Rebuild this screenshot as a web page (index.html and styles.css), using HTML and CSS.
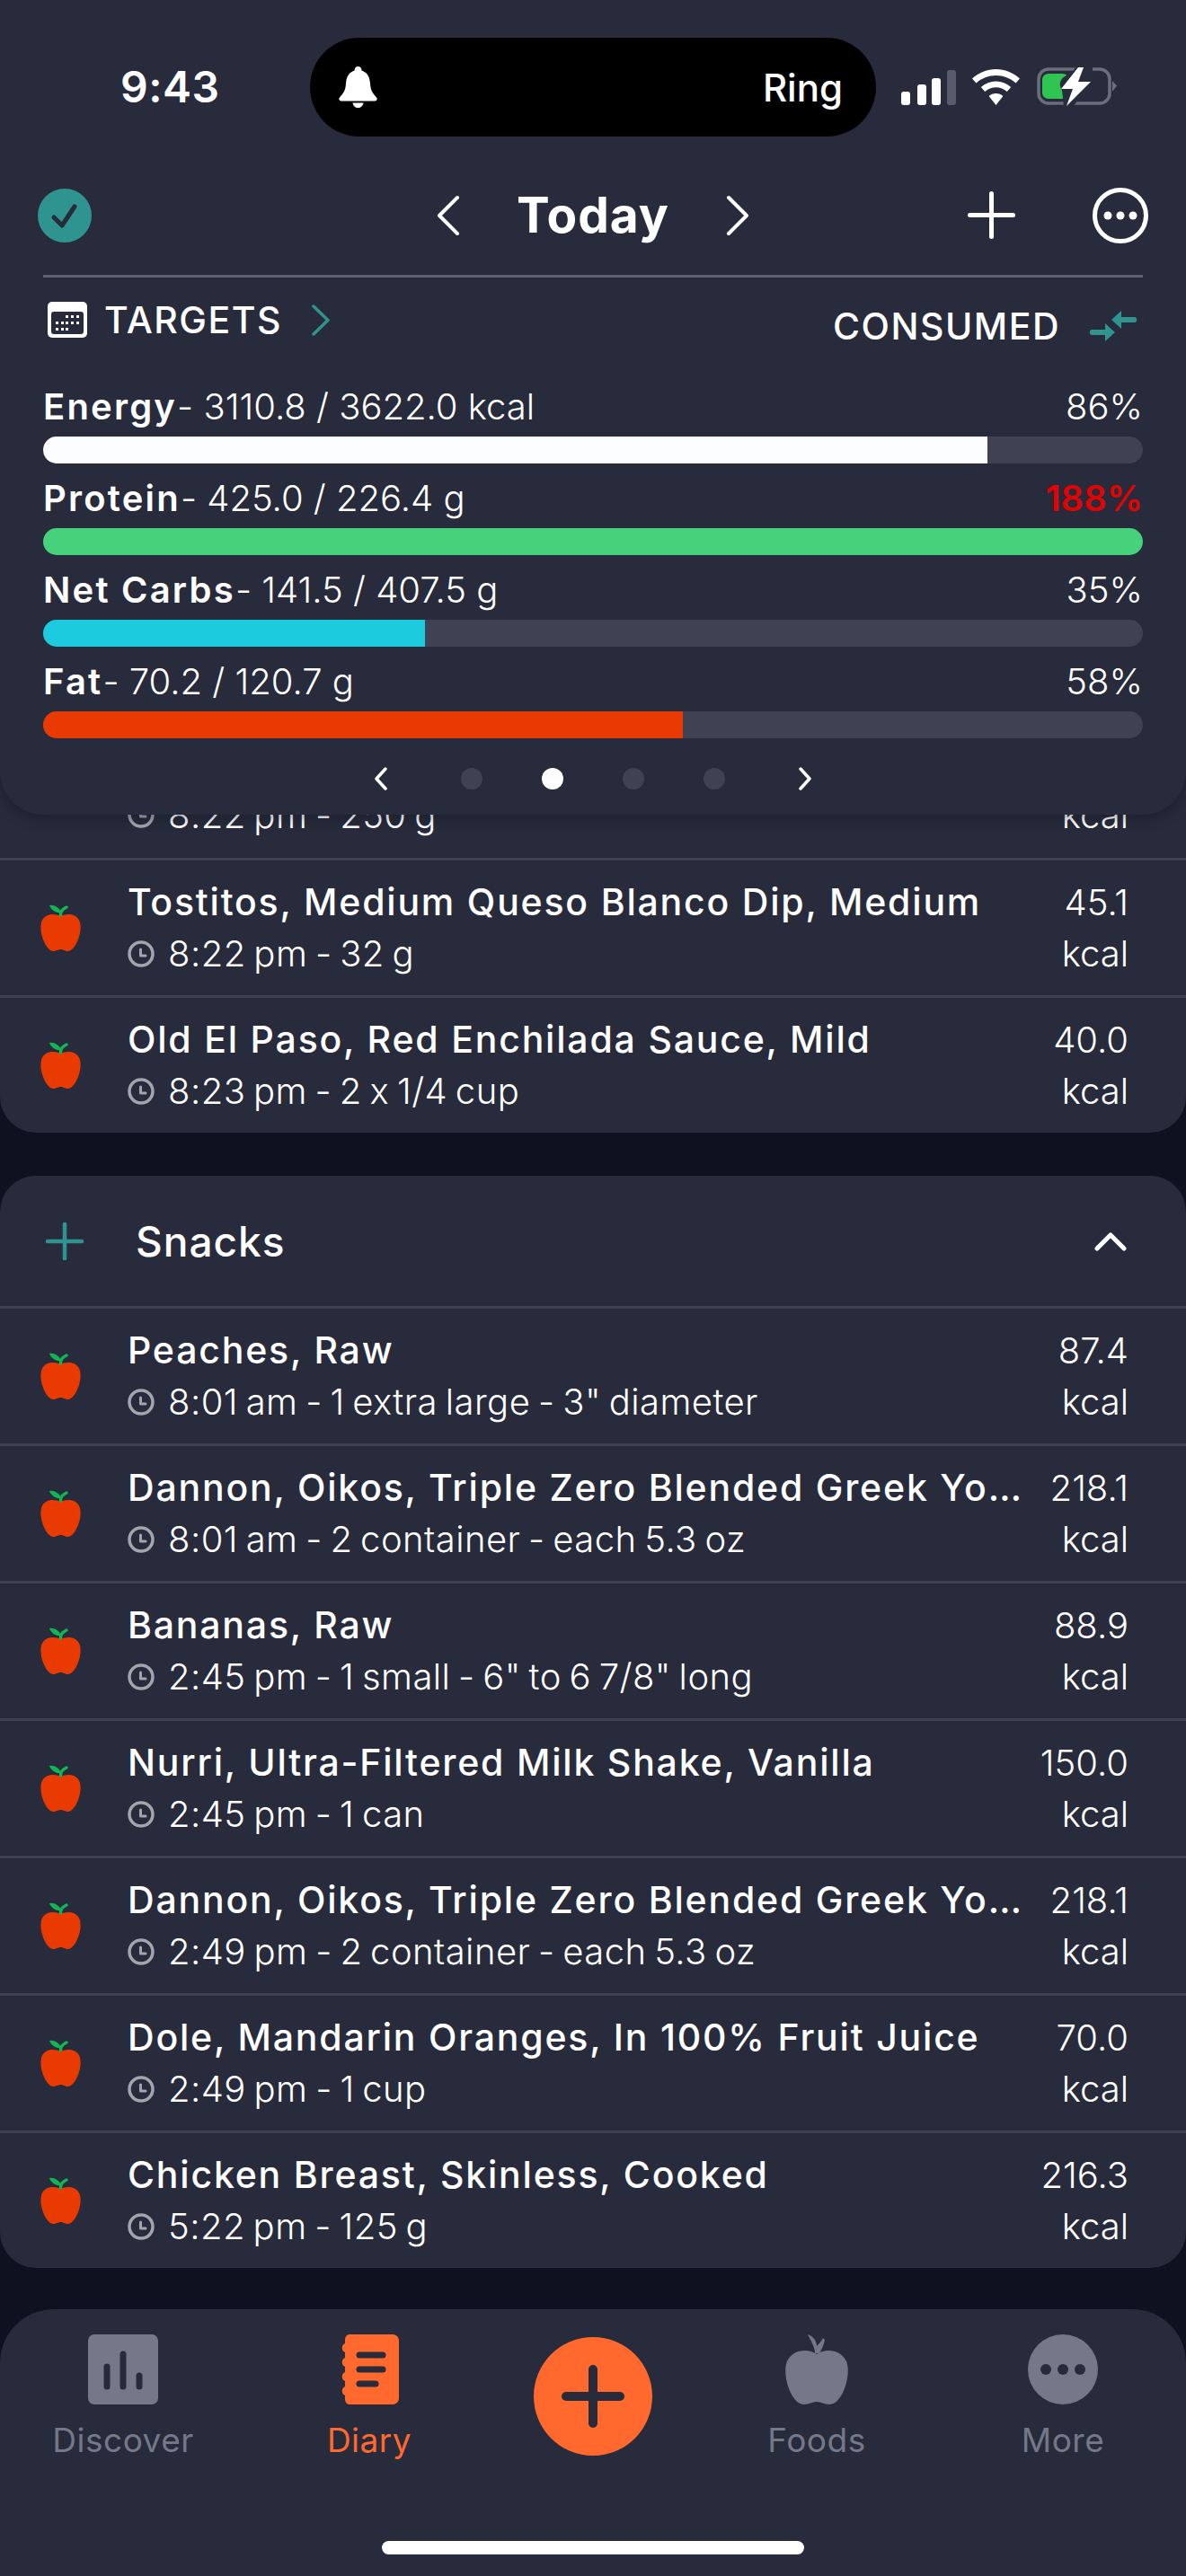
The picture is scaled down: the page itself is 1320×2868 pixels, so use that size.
FILE: index.html
```html
<!DOCTYPE html>
<html lang="en">
<head>
    <meta charset="UTF-8">
    <meta name="viewport" content="width=device-width, initial-scale=1.0">
    <title>Diary</title>
    <link rel="stylesheet" href="styles.css">
</head>
<body>
    <svg class="defs" width="0" height="0">
        <symbol id="apple" viewBox="0 0 45 52">
            <path fill="#e93a02" d="M22.5 13C17 10 4 9 1 20C-2 33 7 52 14 52C18 52 19.5 50 22.5 50C25.5 50 27 52 31 52C38 52 47 33 44 20C41 9 28 10 22.5 13Z"/>
            <path fill="#12b553" d="M10 1C15 0 21 3 23 9C17 10 12 6 10 1Z"/>
            <path fill="none" stroke="#12b553" stroke-width="3.500" stroke-linecap="round" d="M22.5 12C22 8 25 5 29 3"/>
        </symbol>
        <symbol id="clock" viewBox="0 0 30 30">
            <circle cx="15" cy="15" r="13" fill="none" stroke="#a3a5ad" stroke-width="3.500"/>
            <path fill="none" stroke="#a3a5ad" stroke-width="3" stroke-linecap="round" stroke-linejoin="round" d="M14.500 10V17H20"/>
        </symbol>
    </svg>

    <div class="screen">
        <header class="panel">
            <div class="status">
                <div class="time">9:43</div>
                <div class="island">
                    <svg class="bell" viewBox="0 0 43 46"><path fill="#fff" d="M21.500 0C24 0 25.500 2 25.500 4.500C32 6.500 34.500 12 35 19C35.500 27 38 30 42 34.500C43.500 36.500 42.500 38.500 40 38.500H3C0.500 38.500 -0.500 36.500 1 34.500C5 30 7.500 27 8 19C8.500 12 11 6.500 17.500 4.500C17.500 2 19 0 21.500 0ZM15.500 40.500H27.500C27 44 24.500 46 21.500 46C18.500 46 16 44 15.500 40.500Z"/></svg>
                    <span class="ring">Ring</span>
                </div>
                <div class="status-icons">
                    <svg class="signal" viewBox="0 0 61 39">
                        <rect x="0" y="24" width="10" height="15" rx="3" fill="#fff"/>
                        <rect x="18" y="16" width="10" height="23" rx="3" fill="#fff"/>
                        <rect x="34" y="9" width="10" height="30" rx="3" fill="#fff"/>
                        <rect x="51" y="0" width="10" height="39" rx="3" fill="#585b6b"/>
                    </svg>
                    <svg class="wifi" viewBox="0 0 53 40">
                        <path fill="#fff" d="M26.500 0C36 0 45.500 3.800 53 10.500L48.500 15.500C42.500 10 34.500 7 26.500 7C18.500 7 10.500 10 4.500 15.500L0 10.500C7.500 3.800 17 0 26.500 0Z"/>
                        <path fill="#fff" d="M26.500 13.500C32.800 13.500 38.500 15.800 43.200 20L38.800 25C35.300 22 31 20.300 26.500 20.300C22 20.300 17.700 22 14.200 25L9.800 20C14.500 15.800 20.200 13.500 26.500 13.500Z"/>
                        <path fill="#fff" d="M26.500 27C29.500 27 32.300 28.100 34.400 30L26.500 40L18.600 30C20.700 28.100 23.500 27 26.500 27Z"/>
                    </svg>
                    <svg class="battery" viewBox="0 0 90 44">
                        <rect x="2" y="2" width="79" height="38" rx="11" fill="none" stroke="#6b6e7d" stroke-width="3.500"/>
                        <path fill="#6b6e7d" d="M84 15L89 20.500L84 27Z"/>
                        <path fill="#30c552" d="M13 7H28C31 7 33 8 33 9C28 11 25 16 26 21C27 25 29 28 33 30C33 33 31 35 28 35H13C9 35 6 32 6 28V14C6 10 9 7 13 7Z"/>
                        <path fill="#282c3c" d="M28 25L44 -2L62 0V16L40 44H30Z"/>
                        <path fill="#fff" d="M46 0L27 24H40L33 43L60 16H46L52 0Z"/>
                    </svg>
                </div>
            </div>

            <div class="nav">
                <svg class="check" viewBox="0 0 60 60">
                    <circle cx="30" cy="30" r="30" fill="#2f9490"/>
                    <path fill="none" stroke="#272b3b" stroke-width="5" stroke-linecap="round" stroke-linejoin="round" d="M18 32L27 41L41 20"/>
                </svg>
                <div class="day">
                    <svg class="day-arrow" viewBox="0 0 26 46"><path fill="none" stroke="#fff" stroke-width="4" stroke-linecap="round" stroke-linejoin="round" d="M23 3L3 23L23 43"/></svg>
                    <span class="day-name">Today</span>
                    <svg class="day-arrow" viewBox="0 0 26 46"><path fill="none" stroke="#fff" stroke-width="4" stroke-linecap="round" stroke-linejoin="round" d="M3 3L23 23L3 43"/></svg>
                </div>
                <div class="nav-actions">
                    <svg class="nav-plus" viewBox="0 0 53 53"><path fill="none" stroke="#fff" stroke-width="5" stroke-linecap="round" d="M26.500 2.500V50.500M2.500 26.500H50.500"/></svg>
                    <svg class="nav-more" viewBox="0 0 62 62">
                        <circle cx="31" cy="31" r="28.500" fill="none" stroke="#fff" stroke-width="5"/>
                        <circle cx="17" cy="31" r="4.500" fill="#fff"/>
                        <circle cx="31" cy="31" r="4.500" fill="#fff"/>
                        <circle cx="45" cy="31" r="4.500" fill="#fff"/>
                    </svg>
                </div>
            </div>

            <div class="divider"></div>

            <div class="summary">
                <div class="summary-left">
                    <svg class="calendar" viewBox="0 0 44 40">
                        <rect width="44" height="40" rx="5" fill="#fff"/>
                        <rect x="4" y="11" width="36" height="25" rx="3" fill="#272b3b"/>
                        <g fill="#fff">
                            <rect x="20" y="15" width="3" height="3"/><rect x="26" y="15" width="3" height="3"/><rect x="32" y="15" width="3" height="3"/>
                            <rect x="9" y="22" width="3" height="3"/><rect x="15" y="22" width="3" height="3"/><rect x="20" y="22" width="3" height="3"/><rect x="26" y="22" width="3" height="3"/><rect x="32" y="22" width="3" height="3"/>
                            <rect x="9" y="29" width="3" height="3"/><rect x="15" y="29" width="3" height="3"/><rect x="20" y="29" width="3" height="3"/>
                        </g>
                    </svg>
                    <span class="summary-label">TARGETS</span>
                    <svg class="summary-arrow" viewBox="0 0 20 35"><path fill="none" stroke="#2f9490" stroke-width="3.500" stroke-linecap="round" stroke-linejoin="round" d="M2 2L18 17.500L2 33"/></svg>
                </div>
                <div class="summary-right">
                    <span class="summary-label">CONSUMED</span>
                    <svg class="swap" viewBox="0 0 54 34">
                        <path fill="#2f9490" d="M25 10L36 0V7H51C54 7 54 13 51 13H36V20Z"/>
                        <path fill="#2f9490" d="M29 24L18 34V27H3C0 27 0 21 3 21H18V14Z"/>
                    </svg>
                </div>
            </div>

            <div class="metric">
                <div class="metric-text"><span><b>Energy</b>- 3110.8 / 3622.0 kcal</span><span>86%</span></div>
                <div class="track"><div class="fill fill-energy" style="width: 85.89%"></div></div>
            </div>
            <div class="metric">
                <div class="metric-text"><span><b>Protein</b>- 425.0 / 226.4 g</span><span class="over">188%</span></div>
                <div class="track"><div class="fill fill-protein" style="width: 100%"></div></div>
            </div>
            <div class="metric">
                <div class="metric-text"><span><b>Net Carbs</b>- 141.5 / 407.5 g</span><span>35%</span></div>
                <div class="track"><div class="fill fill-carbs" style="width: 34.72%"></div></div>
            </div>
            <div class="metric">
                <div class="metric-text"><span><b>Fat</b>- 70.2 / 120.7 g</span><span>58%</span></div>
                <div class="track"><div class="fill fill-fat" style="width: 58.16%"></div></div>
            </div>

            <div class="pager">
                <svg class="pager-arrow" viewBox="0 0 14 26"><path fill="none" stroke="#fff" stroke-width="3.500" stroke-linecap="round" stroke-linejoin="round" d="M12 2L2 13L12 24"/></svg>
                <span class="dot"></span>
                <span class="dot dot-on"></span>
                <span class="dot"></span>
                <span class="dot"></span>
                <svg class="pager-arrow" viewBox="0 0 14 26"><path fill="none" stroke="#fff" stroke-width="3.500" stroke-linecap="round" stroke-linejoin="round" d="M2 2L12 13L2 24"/></svg>
            </div>
        </header>

        <main class="list">
            <section class="card">
                <div class="row">
                    <svg class="apple"><use href="#apple"/></svg>
                    <div class="row-text">
                        <div class="row-title">&nbsp;</div>
                        <div class="row-sub"><svg class="clock"><use href="#clock"/></svg>8:22 pm - 250 g</div>
                    </div>
                    <div class="row-value"><div>&nbsp;</div><div>kcal</div></div>
                </div>
                <div class="row">
                    <svg class="apple"><use href="#apple"/></svg>
                    <div class="row-text">
                        <div class="row-title">Tostitos, Medium Queso Blanco Dip, Medium</div>
                        <div class="row-sub"><svg class="clock"><use href="#clock"/></svg>8:22 pm - 32 g</div>
                    </div>
                    <div class="row-value"><div>45.1</div><div>kcal</div></div>
                </div>
                <div class="row">
                    <svg class="apple"><use href="#apple"/></svg>
                    <div class="row-text">
                        <div class="row-title">Old El Paso, Red Enchilada Sauce, Mild</div>
                        <div class="row-sub"><svg class="clock"><use href="#clock"/></svg>8:23 pm - 2 x 1/4 cup</div>
                    </div>
                    <div class="row-value"><div>40.0</div><div>kcal</div></div>
                </div>
            </section>

            <section class="card">
                <div class="card-head">
                    <svg class="head-plus" viewBox="0 0 44 44"><path fill="none" stroke="#2f9490" stroke-width="4.500" stroke-linecap="round" d="M22 3V41M3 22H41"/></svg>
                    <span class="head-title">Snacks</span>
                    <svg class="head-chevron" viewBox="0 0 36 22"><path fill="none" stroke="#fff" stroke-width="5" stroke-linecap="round" stroke-linejoin="round" d="M3 19L18 4L33 19"/></svg>
                </div>
                <div class="row">
                    <svg class="apple"><use href="#apple"/></svg>
                    <div class="row-text">
                        <div class="row-title">Peaches, Raw</div>
                        <div class="row-sub"><svg class="clock"><use href="#clock"/></svg>8:01 am - 1 extra large - 3" diameter</div>
                    </div>
                    <div class="row-value"><div>87.4</div><div>kcal</div></div>
                </div>
                <div class="row">
                    <svg class="apple"><use href="#apple"/></svg>
                    <div class="row-text">
                        <div class="row-title">Dannon, Oikos, Triple Zero Blended Greek Yo…</div>
                        <div class="row-sub"><svg class="clock"><use href="#clock"/></svg>8:01 am - 2 container - each 5.3 oz</div>
                    </div>
                    <div class="row-value"><div>218.1</div><div>kcal</div></div>
                </div>
                <div class="row">
                    <svg class="apple"><use href="#apple"/></svg>
                    <div class="row-text">
                        <div class="row-title">Bananas, Raw</div>
                        <div class="row-sub"><svg class="clock"><use href="#clock"/></svg>2:45 pm - 1 small - 6" to 6 7/8" long</div>
                    </div>
                    <div class="row-value"><div>88.9</div><div>kcal</div></div>
                </div>
                <div class="row">
                    <svg class="apple"><use href="#apple"/></svg>
                    <div class="row-text">
                        <div class="row-title">Nurri, Ultra-Filtered Milk Shake, Vanilla</div>
                        <div class="row-sub"><svg class="clock"><use href="#clock"/></svg>2:45 pm - 1 can</div>
                    </div>
                    <div class="row-value"><div>150.0</div><div>kcal</div></div>
                </div>
                <div class="row">
                    <svg class="apple"><use href="#apple"/></svg>
                    <div class="row-text">
                        <div class="row-title">Dannon, Oikos, Triple Zero Blended Greek Yo…</div>
                        <div class="row-sub"><svg class="clock"><use href="#clock"/></svg>2:49 pm - 2 container - each 5.3 oz</div>
                    </div>
                    <div class="row-value"><div>218.1</div><div>kcal</div></div>
                </div>
                <div class="row">
                    <svg class="apple"><use href="#apple"/></svg>
                    <div class="row-text">
                        <div class="row-title">Dole, Mandarin Oranges, In 100% Fruit Juice</div>
                        <div class="row-sub"><svg class="clock"><use href="#clock"/></svg>2:49 pm - 1 cup</div>
                    </div>
                    <div class="row-value"><div>70.0</div><div>kcal</div></div>
                </div>
                <div class="row">
                    <svg class="apple"><use href="#apple"/></svg>
                    <div class="row-text">
                        <div class="row-title">Chicken Breast, Skinless, Cooked</div>
                        <div class="row-sub"><svg class="clock"><use href="#clock"/></svg>5:22 pm - 125 g</div>
                    </div>
                    <div class="row-value"><div>216.3</div><div>kcal</div></div>
                </div>
            </section>
        </main>

        <nav class="tabs">
            <div class="tab">
                <svg class="tab-icon" viewBox="0 0 78 78">
                    <rect width="78" height="78" rx="7" fill="#747888"/>
                    <path fill="none" stroke="#272b3b" stroke-width="7" stroke-linecap="round" d="M21 36V58M39 22V58M57 46V58"/>
                </svg>
                <span class="tab-label">Discover</span>
            </div>
            <div class="tab tab-on">
                <svg class="tab-icon" viewBox="0 0 66 78">
                    <path fill="#ff692e" d="M6 6C6 3 8 0 11 0H59C63 0 66 3 66 7V71C66 75 63 78 59 78H11C8 78 6 75 6 72V68A5.500 5.500 0 0 1 6 58V52A5.500 5.500 0 0 1 6 42V36A5.500 5.500 0 0 1 6 26V20A5.500 5.500 0 0 1 6 10Z"/>
                    <path fill="none" stroke="#272b3b" stroke-width="7" stroke-linecap="round" d="M22 23H48M22 39H48M22 55H40"/>
                </svg>
                <span class="tab-label">Diary</span>
            </div>
            <div class="tab">
                <div class="fab">
                    <svg class="fab-plus" viewBox="0 0 70 70"><path fill="none" stroke="#272b3b" stroke-width="10" stroke-linecap="round" d="M35 5V65M5 35H65"/></svg>
                </div>
            </div>
            <div class="tab">
                <svg class="tab-icon" viewBox="0 0 72 78">
                    <path fill="#747888" d="M36 22C28 16 10 15 3 30C-3 44 7 78 22 78C28 78 31 75 36 75C41 75 44 78 50 78C65 78 75 44 69 30C62 15 44 16 36 22Z"/>
                    <path fill="#747888" d="M26 0C32 2 36 7 36 13C40 9 42 6 43 4L45 6C44 11 42 16 39 21H34C34 13 29 7 26 0Z"/>
                </svg>
                <span class="tab-label">Foods</span>
            </div>
            <div class="tab">
                <svg class="tab-icon" viewBox="0 0 78 78">
                    <circle cx="39" cy="39" r="39" fill="#747888"/>
                    <circle cx="20" cy="39" r="6" fill="#272b3b"/>
                    <circle cx="39" cy="39" r="6" fill="#272b3b"/>
                    <circle cx="58" cy="39" r="6" fill="#272b3b"/>
                </svg>
                <span class="tab-label">More</span>
            </div>
            <div class="home-bar"></div>
        </nav>
    </div>
</body>
</html>
```

FILE: styles.css
```css
body {
    margin: 0;
    background-color: #0f1120;
    font-family: Inter, "Noto Sans", sans-serif;
    font-feature-settings: "calt" 0;
    color: #ffffff;
}
.defs {
    position: absolute;
}
.screen {
    display: flex;
    flex-direction: column;
    width: 1320px;
    height: 2868px;
    overflow: hidden;
}

/* top panel */
.panel {
    position: relative;
    z-index: 2;
    box-sizing: border-box;
    height: 907px;
    padding-top: 42px;
    background-color: #272b3b;
    border-radius: 0 0 48px 48px;
    box-shadow: 0 4px 14px rgba(10, 12, 24, 0.35);
}
.status {
    display: grid;
    grid-template-columns: 345px 630px 1fr;
    height: 110px;
}
.time {
    padding-left: 134px;
    font-size: 48px;
    font-weight: 600;
    letter-spacing: 0.5px;
    line-height: 110px;
}
.island {
    display: flex;
    align-items: center;
    justify-content: space-between;
    padding: 0 37px 0 32px;
    background-color: #000000;
    border-radius: 55px;
}
.bell {
    width: 43px;
    height: 46px;
}
.ring {
    font-size: 42px;
    font-weight: 500;
}
.status-icons {
    display: flex;
    align-items: center;
    padding-left: 28px;
}
.signal {
    width: 61px;
    height: 39px;
}
.wifi {
    width: 53px;
    height: 40px;
    margin-left: 18px;
}
.battery {
    width: 90px;
    height: 44px;
    margin-left: 19px;
}
.nav {
    display: grid;
    grid-template-columns: 1fr auto 1fr;
    align-items: center;
    height: 65px;
    margin-top: 55px;
    padding: 0 42px;
}
.check {
    width: 60px;
    height: 60px;
}
.day {
    display: flex;
    align-items: center;
    gap: 63px;
}
.day-arrow {
    width: 26px;
    height: 46px;
}
.day-name {
    font-size: 55px;
    font-weight: 700;
    letter-spacing: 1px;
    line-height: 65px;
}
.nav-actions {
    display: flex;
    align-items: center;
    justify-content: flex-end;
    gap: 86px;
}
.nav-plus {
    width: 53px;
    height: 53px;
}
.nav-more {
    width: 62px;
    height: 62px;
}
.divider {
    height: 3px;
    margin: 34px 48px 0;
    background-color: #5e6171;
}
.summary {
    display: flex;
    justify-content: space-between;
    height: 105px;
    padding: 24px 54px 0 53px;
    box-sizing: border-box;
}
.summary-left,
.summary-right {
    display: flex;
    align-items: center;
    height: 46px;
}
.summary-right {
    margin-top: 7px;
}
.calendar {
    width: 44px;
    height: 40px;
    margin-right: 19px;
}
.summary-label {
    font-size: 41px;
    font-weight: 500;
    letter-spacing: 1.5px;
}
.summary-arrow {
    width: 20px;
    height: 35px;
    margin-left: 33px;
}
.swap {
    width: 54px;
    height: 34px;
    margin-left: 32px;
}
.metric {
    padding: 0 48px;
}
.metric-text {
    display: flex;
    justify-content: space-between;
    height: 72px;
    font-size: 40px;
    font-weight: 300;
    line-height: 78px;
}
.metric-text b {
    font-weight: 600;
    letter-spacing: 2.2px;
}
.over {
    color: #e00303;
    font-weight: 600;
}
.track {
    height: 30px;
    background-color: #3f4252;
    border-radius: 15px;
    overflow: hidden;
}
.fill {
    height: 100%;
}
.fill-energy {
    background-color: #fcfdff;
}
.fill-protein {
    background-color: #45d27b;
}
.fill-carbs {
    background-color: #1ccbde;
}
.fill-fat {
    background-color: #e93a02;
}
.pager {
    display: flex;
    align-items: center;
    justify-content: center;
    gap: 66px;
    height: 46px;
    margin-top: 22px;
}
.pager-arrow {
    width: 14px;
    height: 26px;
    margin: 0 16px;
}
.dot {
    width: 24px;
    height: 24px;
    background-color: #3f4252;
    border-radius: 50%;
}
.dot-on {
    background-color: #ffffff;
}

/* diary list */
.list {
    flex: 1;
    display: flex;
    flex-direction: column;
    gap: 48px;
    margin-top: -105px;
    min-height: 0;
}
.card {
    background-color: #272b3b;
    border-radius: 0 0 40px 40px;
}
.card + .card {
    border-radius: 40px;
}
.card-head {
    display: flex;
    align-items: center;
    height: 145px;
    padding: 0 50px;
}
.head-plus {
    width: 44px;
    height: 44px;
}
.head-title {
    flex: 1;
    margin-left: 57px;
    font-size: 46px;
    font-weight: 500;
    letter-spacing: 1px;
}
.head-chevron {
    width: 36px;
    height: 22px;
    margin-right: 16px;
}
.row {
    display: flex;
    align-items: center;
    box-sizing: border-box;
    height: 153px;
    padding: 0 64px 0 45px;
}
.row + .row {
    border-top: 3px solid #3d4152;
}
.card-head + .row {
    border-top: 3px solid #3d4152;
}
.apple {
    flex: none;
    width: 45px;
    height: 52px;
    margin-right: 52px;
}
.row-text {
    flex: 1;
    min-width: 0;
}
.row-title {
    font-size: 41px;
    font-weight: 500;
    letter-spacing: 1.8px;
    line-height: 57px;
    white-space: nowrap;
}
.row-sub {
    display: flex;
    align-items: center;
    font-size: 40px;
    font-weight: 300;
    letter-spacing: 0.45px;
    word-spacing: -3px;
    line-height: 57px;
}
.clock {
    flex: none;
    width: 30px;
    height: 30px;
    margin-right: 15px;
}
.row-value {
    flex: none;
    width: 128px;
    font-size: 40px;
    font-weight: 300;
    line-height: 57px;
    text-align: right;
}

/* bottom tabs */
.tabs {
    position: relative;
    display: grid;
    grid-template-columns: 274px 274px 1fr 274px 274px;
    box-sizing: border-box;
    height: 297px;
    padding-top: 28px;
    background-color: #272b3b;
    border-radius: 60px 60px 0 0;
}
.tab {
    display: flex;
    flex-direction: column;
    align-items: center;
    color: #747888;
}
.tab-on {
    color: #ff692e;
}
.tab-icon {
    height: 78px;
    width: auto;
}
.tab-label {
    margin-top: 18px;
    font-size: 37px;
    font-weight: 400;
    letter-spacing: 0.5px;
    line-height: 44px;
}
.fab {
    display: flex;
    align-items: center;
    justify-content: center;
    width: 132px;
    height: 132px;
    margin-top: 3px;
    background-color: #ff692e;
    border-radius: 50%;
}
.fab-plus {
    width: 70px;
    height: 70px;
}
.home-bar {
    position: absolute;
    left: 425px;
    bottom: 24px;
    width: 470px;
    height: 15px;
    background-color: #ffffff;
    border-radius: 8px;
}
```
